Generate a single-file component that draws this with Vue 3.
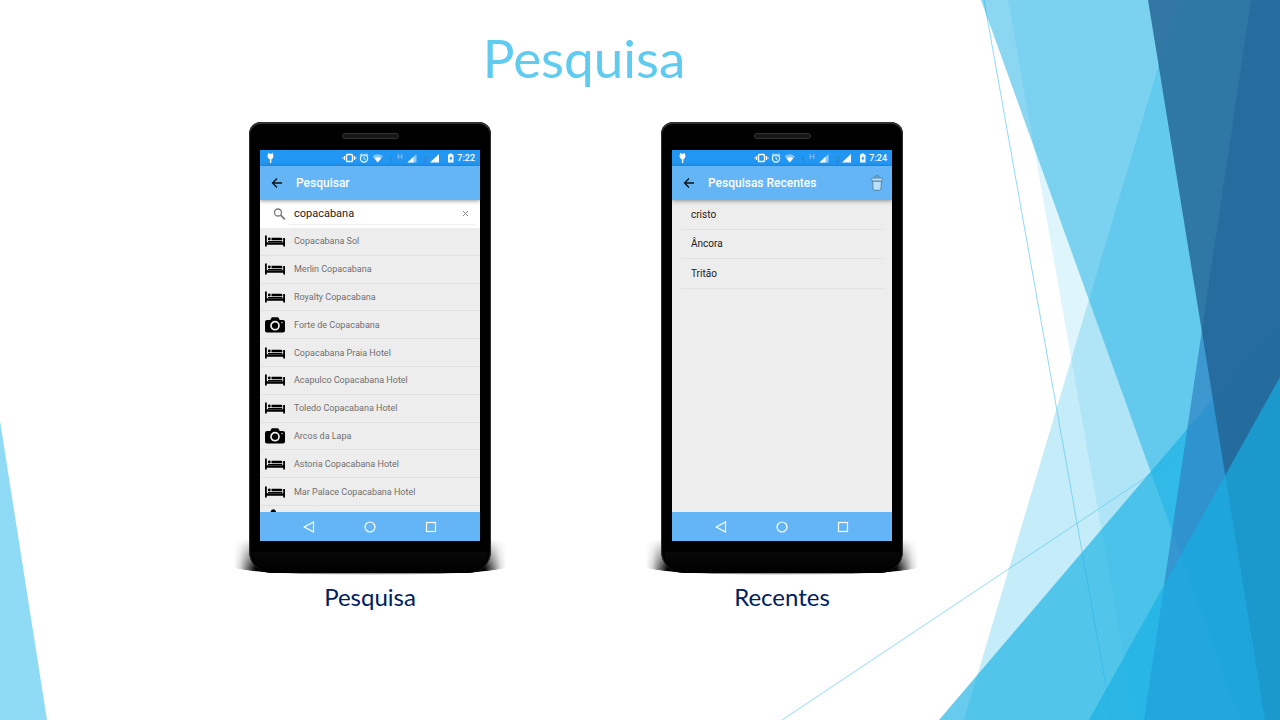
<script setup>
import { ref } from 'vue'

const query = ref('copacabana')

const results = [
  { name: 'Copacabana Sol', kind: 'bed' },
  { name: 'Merlin Copacabana', kind: 'bed' },
  { name: 'Royalty Copacabana', kind: 'bed' },
  { name: 'Forte de Copacabana', kind: 'camera' },
  { name: 'Copacabana Praia Hotel', kind: 'bed' },
  { name: 'Acapulco Copacabana Hotel', kind: 'bed' },
  { name: 'Toledo Copacabana Hotel', kind: 'bed' },
  { name: 'Arcos da Lapa', kind: 'camera' },
  { name: 'Astoria Copacabana Hotel', kind: 'bed' },
  { name: 'Mar Palace Copacabana Hotel', kind: 'bed' },
]

const recents = ['cristo', 'Âncora', 'Tritão']

const phones = [
  { id: 'search', bar: 'Pesquisar', time: '7:22', caption: 'Pesquisa' },
  { id: 'recent', bar: 'Pesquisas Recentes', time: '7:24', caption: 'Recentes' },
]
</script>

<template>
  <main class="slide">
    <svg class="facets" viewBox="0 0 1280 720" preserveAspectRatio="none" aria-hidden="true">
      <g stroke="#5fcbef" stroke-opacity="0.7" stroke-width="1">
        <line x1="984" y1="0" x2="1112" y2="720" />
        <line x1="782" y1="720" x2="1280" y2="388" />
      </g>
      <polygon points="1178,0 1280,0 1280,720 964,720" fill="#5fcbef" fill-opacity="0.36" />
      <polygon points="1008,0 1280,0 1280,720 1135,720" fill="#5fcbef" fill-opacity="0.2" />
      <polygon points="981,0 1280,0 1280,720 1240,720" fill="#17b0e4" fill-opacity="0.5" />
      <polygon points="1280,320 1280,720 939,720" fill="#17b0e4" fill-opacity="0.66" />
      <polygon points="1251,0 1280,0 1280,720 1144,720" fill="#2e83c3" fill-opacity="0.7" />
      <polygon points="1148,0 1280,0 1280,720 1265,720" fill="#226292" fill-opacity="0.8" />
      <polygon points="1280,377 1280,720 1089,720" fill="#17b0e4" fill-opacity="0.66" />
      <polygon points="0,421 47,720 0,720" fill="#5fcbef" fill-opacity="0.7" />
    </svg>

    <div class="content">
      <h1>Pesquisa</h1>
      <div class="phones">
        <figure v-for="p in phones" :key="p.id">
          <div class="phone">
            <div class="speaker"></div>
            <div class="screen">
              <div class="status">
                <svg class="notice" width="10" height="12" viewBox="0 0 10 12" aria-hidden="true">
                  <path d="M2.500 .8l.9 1h2.200l.9-1 .5.4-.4 1q.9.700.9 1.900Q7.600 6.500 5.300 7.400V11H3.900V7.400Q1.400 6.500 1.400 4.100q0-1.200.9-1.900l-.4-1z" fill="#fff" />
                </svg>
                <svg class="signals" width="114" height="16" viewBox="0 0 114 16" aria-hidden="true">
                  <g fill="none" stroke="#fff">
                    <rect x="4.500" y="4.500" width="6" height="7" rx="1" stroke-width="1.400" />
                    <path d="M2.500 6v4M12.500 6v4" stroke-width="1.200" />
                    <path d="M1 7v2M14 7v2" stroke-width="1" opacity="0.7" />
                    <circle cx="22" cy="8.500" r="3.600" stroke-width="1.200" />
                    <path d="M22 6.500v2.300l1.500 1M17.800 5.500l2-1.800M26.200 5.500l-2-1.800" stroke-width="1" />
                  </g>
                  <path d="M30.500 6.300Q35.800 2.200 41 6.300L35.800 12.500z" fill="#fff" opacity="0.45" />
                  <path d="M32.500 8.300Q35.800 6.200 39.200 8.300L35.800 12.500z" fill="#fff" />
                  <text x="47" y="12" font-size="8" fill="#5f7388">1</text>
                  <text x="55" y="9" font-size="8" fill="#9fd2fa">H</text>
                  <path d="M65.500 12.500L74.500 4v8.500z" fill="#fff" opacity="0.5" />
                  <path d="M65.500 12.500L71.500 6.800v5.700z" fill="#fff" />
                  <text x="82" y="12" font-size="8" fill="#5f7388">2</text>
                  <path d="M88 12.500L97 4v8.500z" fill="#fff" />
                  <path d="M106 4.500h1.300v-1h2.700v1h1.500v8H106z" fill="#fff" />
                  <path d="M109.300 5.500l-2 3.400h1.200v2.300l2-3.400h-1.200z" fill="#2196f3" />
                </svg>
                <span class="time">{{ p.time }}</span>
              </div>

              <header class="appbar">
                <button type="button" class="icon" aria-label="Voltar">
                  <svg width="12" height="12" viewBox="0 0 12 12">
                    <path d="M11 6H2M6 1.500L1.500 6 6 10.500" fill="none" stroke="#111" stroke-width="1.300" />
                  </svg>
                </button>
                <h2>{{ p.bar }}</h2>
                <button v-if="p.id === 'recent'" type="button" class="icon trash" aria-label="Limpar">
                  <svg width="14" height="16" viewBox="0 0 14 16">
                    <path d="M5 3V1.800Q5 .8 6 .8h2q1 0 1 1V3" fill="none" stroke="#57849f" />
                    <path d="M2.500 6h9l-.5 8q-.1 1.300-1.300 1.300H4.300Q3.100 15.300 3 14z" fill="#b9dffb" stroke="#57849f" />
                    <rect x="1.500" y="3" width="11" height="3" rx="1.400" fill="#b9dffb" stroke="#57849f" />
                  </svg>
                </button>
              </header>

              <template v-if="p.id === 'search'">
                <div class="search">
                  <svg width="13" height="13" viewBox="0 0 13 13" aria-hidden="true">
                    <circle cx="5" cy="4.500" r="3.500" fill="none" stroke="#777" stroke-width="1.300" />
                    <path d="M7.700 7.200l4.100 4.100" stroke="#777" stroke-width="1.700" />
                  </svg>
                  <div class="field">
                    <input v-model="query" type="text" aria-label="Pesquisar" />
                    <button type="button" class="icon" aria-label="Apagar" @click="query = ''">
                      <svg width="7" height="7" viewBox="0 0 7 7">
                        <path d="M1 1l5 5M6 1L1 6" stroke="#888" />
                      </svg>
                    </button>
                  </div>
                </div>
                <ul class="results">
                  <li v-for="r in results" :key="r.name">
                    <svg v-if="r.kind === 'bed'" width="20" height="18" viewBox="0 0 20 18" aria-hidden="true">
                      <path d="M0 3.500h1.800v6.800h16.400V6H20v8.500h-1.800v-1.800H1.800v1.800H0z" />
                      <circle cx="4.300" cy="7" r="1.400" />
                      <path d="M6.500 5.800h9.500q1.300 0 1.300 1.300v1.200H6.500z" />
                      <path d="M3 9h14.300v1H3z" />
                    </svg>
                    <svg v-else width="20" height="18" viewBox="0 0 20 18" aria-hidden="true">
                      <path d="M2 4h3.300l1-2q.3-.7 1-.7h5.400q.7 0 1 .7l1 2H18q2 0 2 2v8.500q0 2-2 2H2q-2 0-2-2V6q0-2 2-2z" />
                      <circle cx="10" cy="9.700" r="4" fill="none" stroke="#ededed" stroke-width="1.700" />
                      <circle cx="17" cy="6.500" r="0.700" fill="#ededed" />
                    </svg>
                    <span>{{ r.name }}</span>
                  </li>
                  <li class="peek">
                    <svg width="20" height="18" viewBox="0 0 20 18" aria-hidden="true">
                      <path d="M5.500 6Q6 3.200 8.300 3.200T11 6V18H5.500z" />
                    </svg>
                  </li>
                </ul>
              </template>

              <div v-else class="recents">
                <ul>
                  <li v-for="r in recents" :key="r">{{ r }}</li>
                </ul>
              </div>

              <nav class="keys">
                <button type="button" class="icon" aria-label="Voltar">
                  <svg width="12" height="12" viewBox="0 0 12 12">
                    <path d="M10.500 1v10L1.200 6z" fill="none" stroke="#fff" stroke-width="1.200" />
                  </svg>
                </button>
                <button type="button" class="icon" aria-label="Início">
                  <svg width="12" height="12" viewBox="0 0 12 12">
                    <circle cx="6" cy="6" r="5" fill="none" stroke="#fff" stroke-width="1.200" />
                  </svg>
                </button>
                <button type="button" class="icon" aria-label="Aplicativos">
                  <svg width="12" height="12" viewBox="0 0 12 12">
                    <rect x="1.500" y="1.500" width="9" height="9" fill="none" stroke="#fff" stroke-width="1.200" />
                  </svg>
                </button>
              </nav>
            </div>
            <div class="chin"></div>
          </div>
          <figcaption>{{ p.caption }}</figcaption>
        </figure>
      </div>
    </div>
  </main>
</template>

<style>
body {
  margin: 0;
}
</style>

<style scoped>
.slide {
  position: relative;
  min-height: 100vh;
  background: #fff;
  font-family: "Trebuchet MS", Lato, sans-serif;
}
.facets {
  position: absolute;
  inset: 0;
  width: 100%;
  height: 100%;
}
.content {
  position: relative;
  width: 90%;
  padding-top: 22px;
}
h1 {
  margin: 0 0 28px;
  padding-left: 16px;
  font-size: 53px;
  line-height: 72px;
  font-weight: 400;
  text-align: center;
  color: #5fcbef;
}
.phones {
  position: relative;
  z-index: 0;
  display: flex;
  justify-content: center;
  gap: 170px;
}
figure {
  margin: 0;
}
figcaption {
  margin-top: 8px;
  font-size: 24px;
  line-height: 32px;
  text-align: center;
  color: #002060;
}
.phone {
  position: relative;
  width: 220px;
  padding: 0 11px;
  background: #000;
  border-radius: 12px 12px 22px 22px;
  box-shadow: inset 0 1px 1px 1px #333;
  font-family: Roboto, sans-serif;
}
.phone::before {
  content: "";
  position: absolute;
  z-index: -1;
  left: -15px;
  right: -15px;
  bottom: -2px;
  height: 36px;
  background: linear-gradient(90deg, transparent, rgba(0, 0, 0, 0.15) 6px, #000 22px, #000 calc(100% - 22px), rgba(0, 0, 0, 0.15) calc(100% - 6px), transparent);
  mask-image: linear-gradient(transparent, #000 80%, #000 90%, transparent);
  border-radius: 0 0 50% 50% / 0 0 8px 8px;
}
.speaker {
  height: 28px;
  display: flex;
  align-items: center;
  justify-content: center;
}
.speaker::before {
  content: "";
  width: 55px;
  height: 4px;
  border: 1px solid #333;
  border-radius: 3px;
  background: #161616;
}
.screen {
  display: flex;
  flex-direction: column;
  height: 391px;
  overflow: hidden;
  background: #ededed;
}
.chin {
  height: 32px;
  margin: 0 -8px;
  background: linear-gradient(#000 11px, #080808 11px, #000);
  border-radius: 0 0 22px 22px;
}
.icon {
  display: flex;
  align-items: center;
  justify-content: center;
  padding: 0;
  border: 0;
  background: none;
}
.status {
  display: flex;
  align-items: center;
  height: 16px;
  padding: 0 5px 0 6px;
  background: #2196f3;
  color: #fff;
}
.signals {
  margin-left: auto;
}
.time {
  width: 19px;
  font-size: 9px;
  font-weight: 500;
  text-align: right;
}
.appbar {
  position: relative;
  display: flex;
  align-items: center;
  height: 34px;
  padding: 0 8px 0 11px;
  background: #64b5f6;
  box-shadow: 0 1px 4px rgba(0, 0, 0, 0.4);
}
h2 {
  margin: 0 0 0 13px;
  font-size: 12px;
  font-weight: 500;
  color: #fff;
}
.trash {
  margin-left: auto;
}
.search {
  display: flex;
  align-items: center;
  gap: 3px;
  height: 28px;
  padding: 0 5px 0 13px;
  background: #fff;
}
.field {
  flex: 1;
  display: flex;
  align-items: center;
  height: 20px;
  padding: 0 6px 0 5px;
  border-bottom: 1px solid #eee;
}
input {
  flex: 1;
  min-width: 0;
  padding: 0;
  border: 0;
  outline: 0;
  background: none;
  font-family: inherit;
  font-size: 11px;
  color: #222;
}
ul {
  margin: 0;
  padding: 0;
  list-style: none;
}
.results {
  flex: 1;
  min-height: 0;
  display: grid;
  grid-template-rows: repeat(10, 1fr) 6px;
}
.results li {
  display: flex;
  align-items: center;
  gap: 9px;
  padding-left: 5px;
  border-bottom: 1px solid #e2e2e2;
  font-size: 9px;
  color: #707070;
}
.results .peek {
  align-items: flex-start;
  border: 0;
  overflow: hidden;
}
.recents {
  flex: 1;
  padding: 0 9px;
}
.recents ul {
  display: grid;
  grid-template-rows: repeat(3, 1fr);
  height: 89px;
}
.recents li {
  display: flex;
  align-items: center;
  padding-left: 10px;
  border-bottom: 1px solid #e2e2e2;
  font-size: 10px;
  color: #212121;
}
.keys {
  display: flex;
  align-items: center;
  justify-content: center;
  gap: 49px;
  height: 29px;
  background: #64b5f6;
}
</style>
